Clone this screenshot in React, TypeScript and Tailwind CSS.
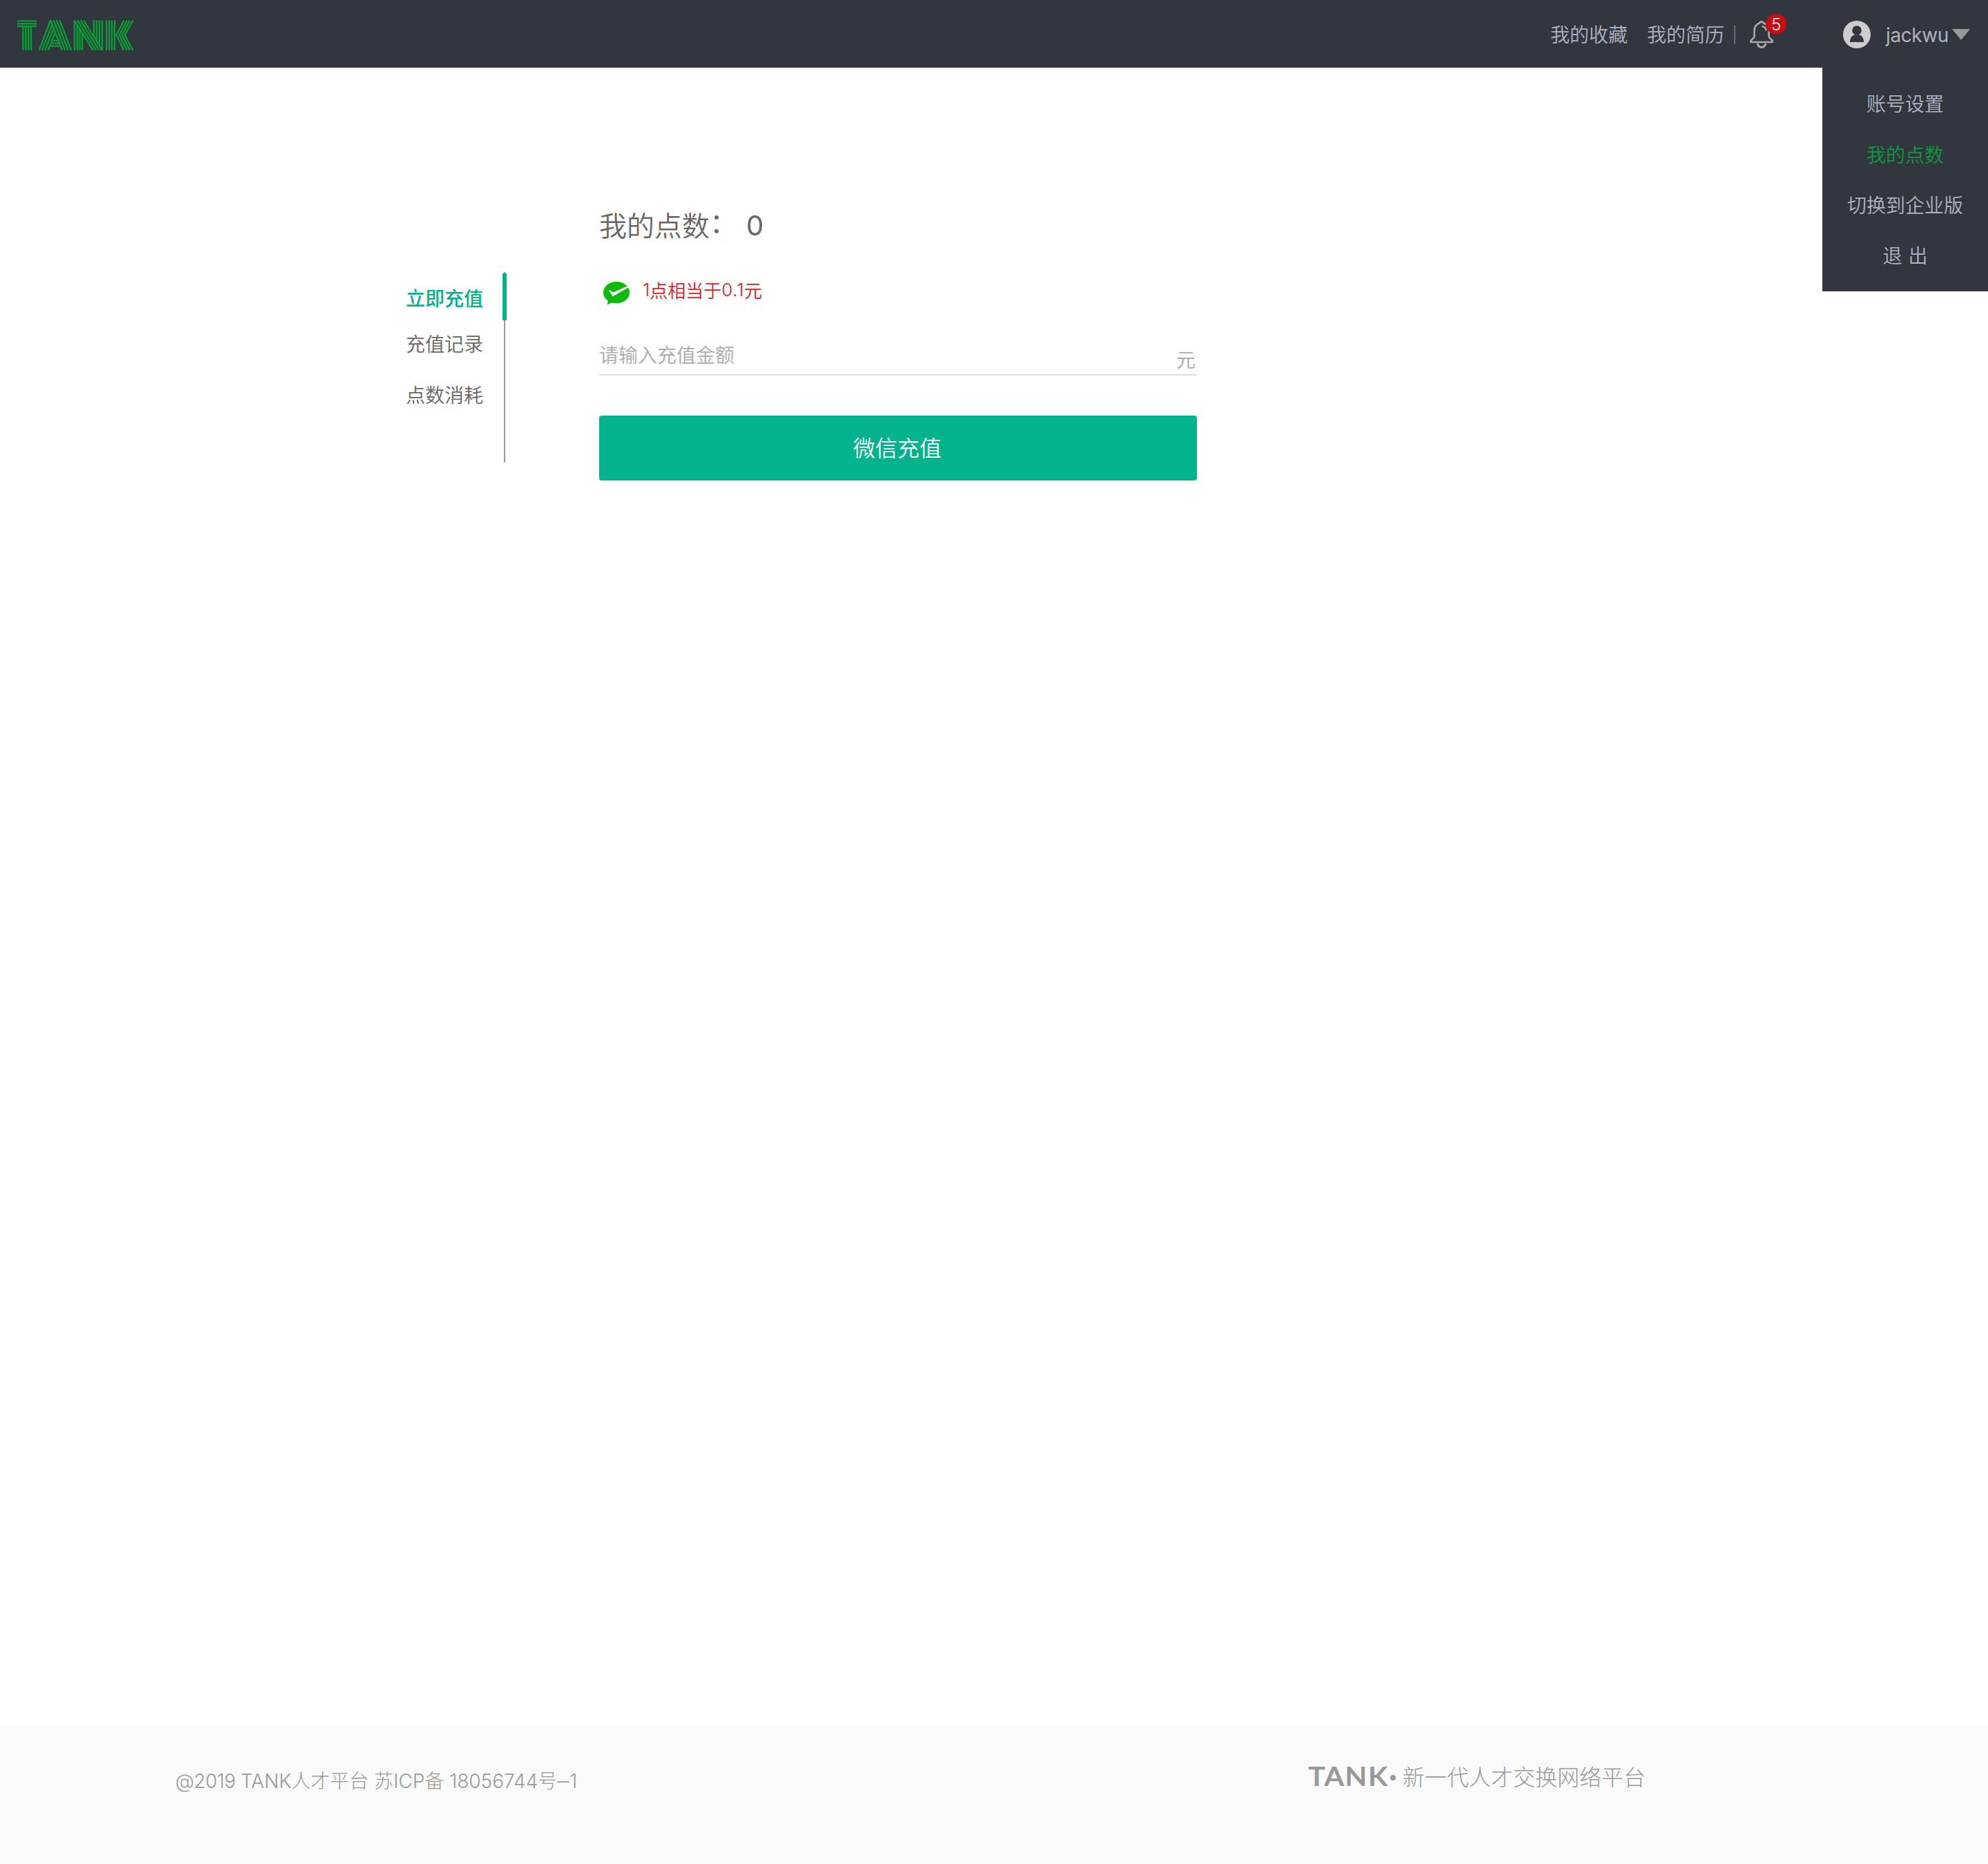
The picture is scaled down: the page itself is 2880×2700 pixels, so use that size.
import React from "react";

const stripeT = "M25 30.4H53.3M25 34.3H53.3M25 38H53.3M33.4 38V72.8M37.3 38V72.8M41.2 38V72.8M45 38V72.8";
const stripeA =
  "M73.3 29.3L56.7 72.8M75.6 35.7L61 72.8M77.7 41.3L65.3 72.8M80 47L69.7 72.8M73.3 29.3L90 72.8M77.7 29.3L94.3 72.8M82 29.3L98.6 72.8M86.3 29.3L103 72.8M76.6 58.7H83.4M75 62.7H85M73.3 66.7H86.7";
const stripeN =
  "M108 29.3V72.8M111.8 36V72.8M115.5 41.7V72.8M119.3 47.7V72.8M108 29.3L134.8 72.8M112.4 29.3L139.2 72.8M116.8 29.3L143.6 72.8M121.2 29.3L148 72.8M136 29.3V53.3M140 29.3V60M144 29.3V66.3M148 29.3V72.8";
const stripeK =
  "M154.3 29.3V72.8M158.2 29.3V72.8M162 29.3V72.8M166 29.3V72.8M179.4 29.6L168.6 51L179.4 72.6M183.8 29.6L172.8 51L183.8 72.6M188.1 29.6L176.8 51L188.1 72.6M192.4 29.6L180.8 51L192.4 72.6";

function Logo() {
  return (
    <svg width="240" height="98" viewBox="0 0 240 98" fill="none" stroke="#089c34" strokeWidth="2.4">
      <path d={stripeT} />
      <path d={stripeA} />
      <path d={stripeN} />
      <path d={stripeK} />
    </svg>
  );
}

function Bell() {
  return (
    <svg width="36" height="42" viewBox="0 0 36 42" fill="none" stroke="#aaaaaa" strokeWidth="2.6" strokeLinecap="round" strokeLinejoin="round">
      <path d="M18 2.2C16.600 2.200 16.200 3.800 14.500 4.500C10 6.500 7.500 10.500 7.500 15.500V23.500C7.500 26.500 2 28.500 2 31.300Q2 32 3 32H33Q34 32 34 31.300C34 28.500 28.500 26.500 28.500 23.500V15.500C28.500 10.500 26 6.500 21.500 4.500C19.800 3.800 19.400 2.200 18 2.200Z" />
      <path d="M19.500 9.300C22.300 10 24 11.800 24.300 14.500" />
      <path d="M12.300 35.200C13.500 38 15.500 39.500 18 39.500S22.500 38 23.700 35.200" strokeWidth="3" />
    </svg>
  );
}

function Avatar() {
  return (
    <svg width="40" height="40" viewBox="0 0 40 40">
      <circle cx="20" cy="20" r="20" fill="#cdcdcd" />
      <circle cx="20" cy="14" r="6.800" fill="#32363e" />
      <path d="M10 31C10 25 13 21.500 17 20.300H23C27 21.500 30 25 30 31Z" fill="#32363e" />
    </svg>
  );
}

function WechatPay() {
  return (
    <svg width="38" height="34" viewBox="0 0 38 34">
      <path
        d="M19 0C8.500 0 0 7 0 15.800C0 20.500 2.400 24.700 6.800 27.600L5.800 32.500Q5.700 33.500 6.700 33L12.200 30.200C14.300 30.900 16.600 31.300 19 31.300C29.500 31.300 38 24.500 38 15.800C38 13.200 37.300 10.800 36 8.700L14.500 20.700Q13.200 21.400 12.500 20L8.300 13.200Q7.800 11.700 9.300 12.300L13.500 15Q14.500 15.500 15.700 15L34.600 6.600C31.200 2.600 25.500 0 19 0Z"
        fill="#0abb07"
      />
    </svg>
  );
}

const menu = [
  { label: "账号设置", active: false },
  { label: "我的点数", active: true },
  { label: "切换到企业版", active: false },
  { label: "退 出", active: false },
];

function Header() {
  return (
    <header className="relative flex h-[98px] items-center bg-[#32363e] text-[28px] leading-[40px] text-[#aeb3c2]">
      <Logo />
      <nav className="ml-auto flex h-[40px] items-center">
        <a className="mr-7">我的收藏</a>
        <a>我的简历</a>
        <span className="ml-[14px] mt-[3px] h-[27px] w-[2px] bg-[#6c6c6c]" />
        <div className="relative ml-5 mt-[2px] h-[42px] w-[36px]">
          <Bell />
          <span className="absolute -top-[9px] left-[24px] flex h-[30px] w-[30px] items-center justify-center rounded-full bg-[#c90c0f] pt-[2px] font-['Inter'] text-[24px] leading-none text-white">
            5
          </span>
        </div>
      </nav>
      <div className="ml-[100px] flex w-[210px] items-center pt-[2px]">
        <Avatar />
        <span className="ml-[22px] w-[90px] pt-[1px] font-['Inter',sans-serif] font-[380] tracking-[-0.4px]">jackwu</span>
        <svg className="ml-[6px]" width="26" height="16" viewBox="0 0 26 16">
          <path d="M0 0H26L13 16Z" fill="#999999" />
        </svg>
      </div>
      <ul className="absolute right-0 top-[98px] flex h-[324px] w-[240px] flex-col bg-[#32363e] pt-[15px] text-center">
        {menu.map((m) => (
          <li
            key={m.label}
            className={m.active ? "h-[73.400px] leading-[74px] text-[#0a9b40]" : "h-[73.400px] leading-[73px] [word-spacing:3px]"}
          >
            {m.label}
          </li>
        ))}
      </ul>
    </header>
  );
}

export default function App() {
  return (
    <div className="flex h-[2700px] w-[2880px] flex-col bg-white font-['Noto_Sans_CJK_SC',sans-serif] font-[350]">
      <Header />
      <main className="flex flex-1 items-start pl-[588px]">
        <aside className="mt-[296px] flex h-[276px]">
          <ul className="w-[140px] text-[28px] leading-[40px] text-[#666666]">
            <li className="mt-[17px] font-medium text-[#03b38c]">立即充值</li>
            <li className="mt-[26px]">充值记录</li>
            <li className="mt-[34px]">点数消耗</li>
          </ul>
          <div className="flex w-[6px] flex-col items-center">
            <span className="h-[2px] w-[2px] bg-[#999999]" />
            <span className="h-[68px] w-[6px] bg-[#03b38c]" />
            <span className="w-[2px] flex-1 bg-[#999999]" />
          </div>
        </aside>
        <section className="ml-[134px] w-[866px] pt-[198px]">
          <h1 className="flex h-[60px] text-[40px] leading-[58px] text-[#666666]">
            <span>我的点数</span>
            <span className="-mt-[5px]">：</span>
            <span className="ml-[13px] pt-[2px] font-['Inter',sans-serif] font-[380]">0</span>
          </h1>
          <div className="mt-[34px] flex h-[60px] pl-[6px] text-[26px] leading-[60px] text-[#e02020]">
            <div className="mt-[18px]">
              <WechatPay />
            </div>
            <p className="ml-[19px] flex">
              <span className="font-['Inter',sans-serif]">1</span>
              <span>点相当于</span>
              <span className="font-['Inter',sans-serif] tracking-[0.7px]">0.1</span>
              <span>元</span>
            </p>
          </div>
          <div className="mt-[34px] flex h-[60px] justify-between border-b-2 border-[#dddddd] text-[28px] leading-[58px] text-[#aaaaaa]">
            <span>请输入充值金额</span>
            <span className="mr-[2px] mt-[7px]">元</span>
          </div>
          <button className="mt-[58px] h-[94px] w-full rounded bg-[#03b38c] pb-[5px] pr-[2px] text-[32px] text-white">微信充值</button>
        </section>
      </main>
      <footer className="flex h-[200px] items-start bg-[#fafafa] pl-[254px] font-light text-[#999999]">
        <p className="mt-[60px] w-[640px] whitespace-nowrap font-['Inter','Noto_Sans_CJK_SC',sans-serif] text-[28px] leading-[40px]">
          <span className="tracking-[-0.5px]">@2019 </span>TANK人才平台 苏ICP备 18056744号
          <span className="inline-block origin-left scale-x-125">–</span>
          <span className="ml-[4px]">1</span>
        </p>
        <p className="ml-[1001px] mt-[48px] flex items-center text-[32px] leading-[48px]">
          <span className="w-[118px] origin-left scale-x-110 font-['Lato'] text-[38px] font-bold tracking-[1px]">TANK</span>
          <span className="ml-[1px] mt-[5px] h-2 w-2 rounded-full bg-[#999999]" />
          <span className="ml-[10px]">新一代人才交换网络平台</span>
        </p>
      </footer>
    </div>
  );
}
